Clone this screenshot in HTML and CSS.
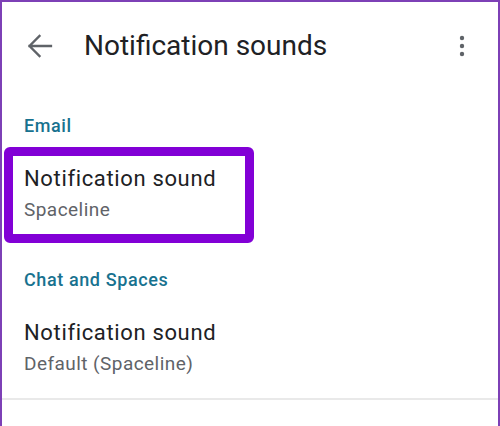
FILE: index.html
```html
<!DOCTYPE html>
<html lang="en">
<head>
<meta charset="utf-8">
<title>Notification sounds</title>
<link rel="stylesheet" href="styles.css">
</head>
<body>
<div class="app">
  <header class="topbar">
    <svg class="back" width="32" height="32" viewBox="0 0 32 32" aria-hidden="true">
      <path d="M27 16H5.5M15.5 6L5.5 16l10 10" fill="none" stroke="#5f6368" stroke-width="2.3" stroke-linecap="square" stroke-linejoin="miter"/>
    </svg>
    <h1 class="title">Notification sounds</h1>
    <svg class="more" width="24" height="24" viewBox="0 0 24 24" aria-hidden="true">
      <circle cx="12" cy="4" r="2.2" fill="#5f6368"/>
      <circle cx="12" cy="12" r="2.2" fill="#5f6368"/>
      <circle cx="12" cy="20" r="2.2" fill="#5f6368"/>
    </svg>
  </header>

  <section class="section">
    <h2 class="section-title">Email</h2>
    <div class="item">
      <div class="item-title">Notification sound</div>
      <div class="item-sub">Spaceline</div>
      <div class="highlight"></div>
    </div>
  </section>

  <section class="section">
    <h2 class="section-title">Chat and Spaces</h2>
    <div class="item">
      <div class="item-title">Notification sound</div>
      <div class="item-sub">Default (Spaceline)</div>
    </div>
  </section>

  <div class="divider"></div>
</div>
</body>
</html>
```
FILE: styles.css
```css
* { box-sizing: border-box; }
html, body { margin: 0; padding: 0; background: #fff; }
body { font-family: Roboto, "Noto Sans", "Liberation Sans", sans-serif; }

.app {
  width: 500px;
  height: 426px;
  border: 2px solid #7d40b6;
  border-bottom: none;
  background: #fff;
  overflow: hidden;
}

.topbar {
  height: 88px;
  display: flex;
  align-items: center;
  padding: 0 24px 0 22px;
}
.back { flex: none; display: block; }
.title {
  margin: 0 0 0 28px;
  font-size: 28px;
  font-weight: 400;
  color: #202124;
  line-height: 36px;
  letter-spacing: 0;
}
.more { flex: none; margin-left: auto; display: block; }

.section { padding-top: 24px; }
.section-title {
  margin: 0;
  padding: 0 22px;
  font-size: 18px;
  font-weight: 500;
  line-height: 24px;
  letter-spacing: 0.6px;
  color: #18728f;
}

.item {
  position: relative;
  padding: 26px 22px 22px;
}
.item-title {
  font-size: 22px;
  line-height: 30px;
  letter-spacing: 0.65px;
  color: #202124;
}
.item-sub {
  margin-top: 4px;
  font-size: 19px;
  line-height: 24px;
  letter-spacing: 0.45px;
  color: #5f6368;
}

.highlight {
  position: absolute;
  left: 2px;
  top: 9px;
  width: 250px;
  height: 96px;
  border: 9px solid #8200d6;
  border-radius: 6px;
}

.divider {
  height: 2px;
  background: #e9e9e9;
}
```
